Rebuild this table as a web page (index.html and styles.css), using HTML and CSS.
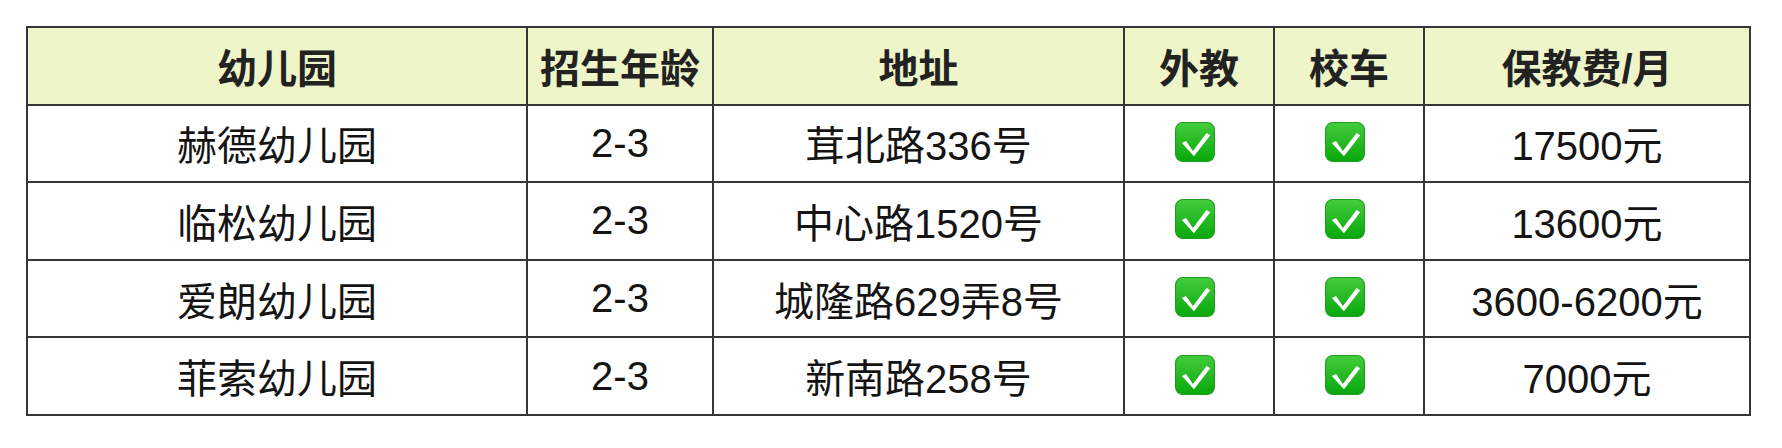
FILE: index.html
```html
<!DOCTYPE html>
<html lang="zh-CN">
<head>
<meta charset="utf-8">
<title>幼儿园对比</title>
<link rel="stylesheet" href="styles.css">
</head>
<body>
<div class="page">
  <div class="table">
    <div class="cell head">幼儿园</div>
    <div class="cell head">招生年龄</div>
    <div class="cell head">地址</div>
    <div class="cell head">外教</div>
    <div class="cell head">校车</div>
    <div class="cell head">保教费/月</div>

    <div class="cell">赫德幼儿园</div>
    <div class="cell">2-3</div>
    <div class="cell">茸北路336号</div>
    <div class="cell emo"><svg class="check" viewBox="0 0 38 38"><use href="#ck"/></svg></div>
    <div class="cell emo"><svg class="check" viewBox="0 0 38 38"><use href="#ck"/></svg></div>
    <div class="cell">17500元</div>

    <div class="cell">临松幼儿园</div>
    <div class="cell">2-3</div>
    <div class="cell">中心路1520号</div>
    <div class="cell emo"><svg class="check" viewBox="0 0 38 38"><use href="#ck"/></svg></div>
    <div class="cell emo"><svg class="check" viewBox="0 0 38 38"><use href="#ck"/></svg></div>
    <div class="cell">13600元</div>

    <div class="cell">爱朗幼儿园</div>
    <div class="cell">2-3</div>
    <div class="cell">城隆路629弄8号</div>
    <div class="cell emo"><svg class="check" viewBox="0 0 38 38"><use href="#ck"/></svg></div>
    <div class="cell emo"><svg class="check" viewBox="0 0 38 38"><use href="#ck"/></svg></div>
    <div class="cell">3600-6200元</div>

    <div class="cell">菲索幼儿园</div>
    <div class="cell">2-3</div>
    <div class="cell">新南路258号</div>
    <div class="cell emo"><svg class="check" viewBox="0 0 38 38"><use href="#ck"/></svg></div>
    <div class="cell emo"><svg class="check" viewBox="0 0 38 38"><use href="#ck"/></svg></div>
    <div class="cell">7000元</div>
  </div>
</div>
<svg class="defs" width="0" height="0" aria-hidden="true">
  <defs>
    <linearGradient id="gg" x1="0" y1="0" x2="0" y2="1">
      <stop offset="0" stop-color="#44cc3c"/>
      <stop offset="1" stop-color="#08a80c"/>
    </linearGradient>
    <g id="ck">
      <rect x="0.5" y="0.5" width="37" height="37" rx="7" fill="url(#gg)" stroke="#1e9c1e" stroke-width="1"/>
      <path d="M6.5 20 L10.5 18 L17 27.5 L30 10.5 L33.5 12.5 L18 32.5 Z" fill="#ffffff"/>
    </g>
  </defs>
</svg>
</body>
</html>
```
FILE: styles.css
```css
html, body {
  margin: 0;
  padding: 0;
  background: #ffffff;
}
.page {
  padding: 26px 0 0 26px;
}
.defs {
  position: absolute;
  width: 0;
  height: 0;
}
.table {
  display: grid;
  grid-template-columns: 500px 186px 411px 150px 150px 326px;
  grid-auto-rows: 77.6px;
  width: max-content;
  border-top: 2px solid #363638;
  border-left: 2px solid #363638;
  font-family: "Liberation Sans", "Noto Sans CJK SC", sans-serif;
  font-size: 40px;
  color: #141414;
}
.cell {
  box-sizing: border-box;
  border-right: 2px solid #363638;
  border-bottom: 2px solid #363638;
  display: flex;
  align-items: center;
  justify-content: center;
  white-space: nowrap;
}
.head {
  background: #eef5c8;
  font-weight: 700;
  color: #222222;
}
.check {
  width: 40px;
  height: 40px;
  display: block;
  margin: 0 9px 3px 0;
}
```
